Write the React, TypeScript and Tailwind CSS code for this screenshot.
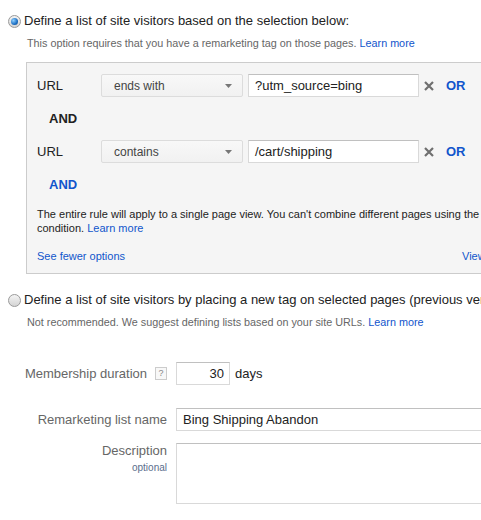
import React from 'react';

const font = { fontFamily: '"Liberation Sans", Arial, sans-serif' };

function Radio({ checked }: { checked?: boolean }) {
  return (
    <span className="relative inline-flex w-[13px] h-[13px] shrink-0 items-center justify-center rounded-full border border-[#9a9a9a] bg-gradient-to-b from-[#f4f4f4] to-[#d4d4d4]">
      {checked && (
        <span className="w-[7px] h-[7px] rounded-full bg-[radial-gradient(circle_at_35%_35%,#8fd0ff,#1c6fc4_60%,#0b3f80)]" />
      )}
    </span>
  );
}

function Select({ label }: { label: string }) {
  return (
    <div className="w-[142px] h-[23px] shrink-0 flex items-center justify-between pl-[12px] pr-[10px] border border-[#dcdcdc] rounded-[2px] bg-gradient-to-b from-[#f8f8f8] to-[#f1f1f1] text-[12px] text-[#444]">
      <span>{label}</span>
      <svg width="7" height="4" viewBox="0 0 7 4">
        <path d="M0 0h7L3.5 4z" fill="#777" />
      </svg>
    </div>
  );
}

function CloseX() {
  return (
    <svg width="10" height="10" viewBox="0 0 10 10" className="shrink-0">
      <path d="M1 1l8 8M9 1l-8 8" stroke="#6f6f6f" strokeWidth="2.2" />
    </svg>
  );
}

function Rule({ value, op }: { value: string; op: string }) {
  return (
    <div className="flex items-center h-[23px]">
      <span className="w-[64px] shrink-0 text-[13px] text-[#222]">URL</span>
      <Select label={op} />
      <div className="ml-[5px] w-[171px] h-[23px] shrink-0 flex items-center px-[6px] bg-white border border-[#d9d9d9] border-t-[#c0c0c0] text-[13px] text-[#222]">
        {value}
      </div>
      <span className="ml-[5px]">
        <CloseX />
      </span>
      <span className="ml-[12px] text-[13px] font-bold text-[#15c]">OR</span>
    </div>
  );
}

export default function App() {
  return (
    <div className="w-[481px] h-[520px] overflow-hidden bg-white whitespace-nowrap" style={font}>
      <div className="pt-[13px] pl-[8px] flex items-center gap-[3px] leading-[16px]">
        <Radio checked />
        <span className="text-[13px] text-[#222]">Define a list of site visitors based on the selection below:</span>
      </div>
      <div className="pl-[27px] mt-[7px] text-[10.8px] leading-[14px] text-[#666]">
        This option requires that you have a remarketing tag on those pages. <span className="text-[#15c]">Learn more</span>
      </div>

      <div className="ml-[26px] mt-[12px] w-[600px] h-[212px] border border-[#ccc] bg-[#f5f5f5] pl-[10px] pt-[11px]">
        <Rule value="?utm_source=bing" op="ends with" />
        <div className="h-[43px] flex items-center pl-[12px] text-[13px] font-bold text-[#222]">AND</div>
        <Rule value="/cart/shipping" op="contains" />
        <div className="h-[44px] flex items-center pl-[12px] text-[13px] font-bold text-[#15c]">AND</div>
        <div className="text-[11px] leading-[14px] text-[#222]">
          The entire rule will apply to a single page view. You can't combine different pages using the "AND"
          <br />
          condition. <span className="text-[#15c]">Learn more</span>
        </div>
        <div className="mt-[14px] flex text-[11px] leading-[14px] text-[#15c]">
          <span className="w-[425px] shrink-0">See fewer options</span>
          <span>View rule definition</span>
        </div>
      </div>

      <div className="mt-[18px] pl-[8px] flex items-center gap-[3px] leading-[16px]">
        <Radio />
        <span className="text-[13px] text-[#222]">
          Define a list of site visitors by placing a new tag on selected pages (previous version)
        </span>
      </div>
      <div className="pl-[27px] mt-[7px] text-[10.8px] leading-[14px] text-[#666]">
        Not recommended. We suggest defining lists based on your site URLs. <span className="text-[#15c]">Learn more</span>
      </div>

      <div className="mt-[33px] flex flex-col">
        <div className="flex items-center">
          <div className="w-[167px] shrink-0 flex items-center justify-end gap-[8px] text-[13px] text-[#666]">
            <span>Membership duration</span>
            <span className="w-[12px] h-[13px] flex items-center justify-center border border-[#ccc] text-[9px] text-[#888] bg-[#f8f8f8]">?</span>
          </div>
          <div className="ml-[9px] w-[54px] h-[23px] shrink-0 flex items-center justify-end pr-[5px] bg-white border border-[#d9d9d9] border-t-[#c0c0c0] text-[13px] text-[#222]">
            30
          </div>
          <span className="ml-[5px] text-[13px] text-[#222]">days</span>
        </div>

        <div className="flex items-center mt-[23px]">
          <div className="w-[167px] shrink-0 text-right text-[13px] text-[#666]">Remarketing list name</div>
          <div className="ml-[9px] w-[400px] h-[23px] shrink-0 flex items-center px-[6px] bg-white border border-[#d9d9d9] border-t-[#c0c0c0] text-[13px] text-[#222]">
            Bing Shipping Abandon
          </div>
        </div>

        <div className="flex items-start mt-[12px]">
          <div className="w-[167px] shrink-0 flex flex-col items-end">
            <span className="text-[13px] leading-[16px] text-[#666]">Description</span>
            <span className="mt-[3px] text-[10px] leading-[12px] text-[#5a6e8c]">optional</span>
          </div>
          <div className="ml-[9px] w-[400px] h-[61px] shrink-0 bg-white border border-[#d9d9d9] border-t-[#c0c0c0]" />
        </div>
      </div>
    </div>
  );
}
